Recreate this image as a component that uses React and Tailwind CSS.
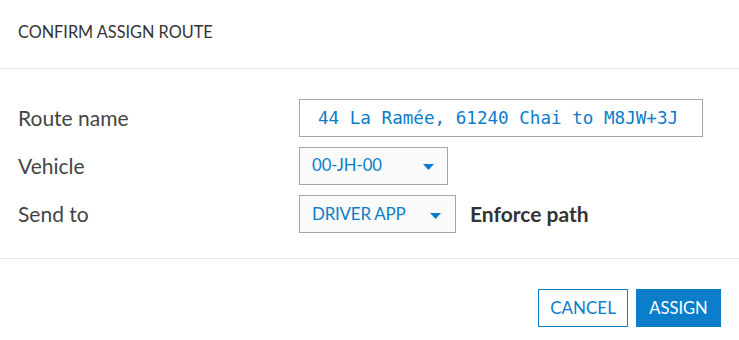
export default function App() {
  const lato = { fontFamily: "Lato, 'Noto Sans', sans-serif" };
  return (
    <div className="w-[739px] h-[340px] bg-white text-[#333]" style={lato}>
      <div className="h-[69px] border-b border-[#e6e6e6] flex items-center px-[18px] pb-[4px]">
        <div className="text-[16.3px] text-[#333]">CONFIRM ASSIGN ROUTE</div>
      </div>
      <div className="px-[18px] pt-[30px] pb-[25px] border-b border-[#e6e6e6] flex flex-col gap-[10px]">
        <div className="flex items-center">
          <div className="w-[281px] text-[21px] text-[#444]">Route name</div>
          <div className="w-[404px] h-[38px] border border-[#a3a6aa] flex items-center pl-[18px] overflow-hidden">
            <span className="text-[17.6px] text-[#0b7dca] whitespace-nowrap" style={{ fontFamily: "'DejaVu Sans Mono', monospace" }}>
              44 La Ramée, 61240 Chai to M8JW+3J
            </span>
          </div>
        </div>
        <div className="flex items-center">
          <div className="w-[281px] text-[21px] text-[#444]">Vehicle</div>
          <div className="w-[149px] h-[38px] border border-[#a3a6aa] bg-[#fafafa] flex items-center justify-between pl-[12px] pr-[13px]">
            <span className="text-[16.7px] text-[#0b7dca]">00-JH-00</span>
            <svg width="11" height="6" viewBox="0 0 11 6" className="mt-[2px]"><path d="M0 0H11L5.5 6Z" fill="#0b7dca" /></svg>
          </div>
        </div>
        <div className="flex items-center">
          <div className="w-[281px] text-[21px] text-[#444]">Send to</div>
          <div className="w-[157px] h-[38px] border border-[#a3a6aa] bg-[#fafafa] flex items-center justify-between pl-[12px] pr-[14px]">
            <span className="text-[17px] text-[#0b7dca] tracking-[-0.25px]">DRIVER APP</span>
            <svg width="11" height="6" viewBox="0 0 11 6" className="mt-[4px]"><path d="M0 0H11L5.5 6Z" fill="#0b7dca" /></svg>
          </div>
          <div className="ml-[14px] text-[21px] font-bold text-[#333]">Enforce path</div>
        </div>
      </div>
      <div className="flex justify-end gap-[8px] px-[18px] pt-[30px]">
        <button className="w-[90px] h-[38px] border border-[#0b7dca] text-[#0b7dca] text-[17px] bg-white">CANCEL</button>
        <button className="w-[85px] h-[38px] bg-[#0b7dca] text-white text-[16.5px]">ASSIGN</button>
      </div>
    </div>
  );
}
